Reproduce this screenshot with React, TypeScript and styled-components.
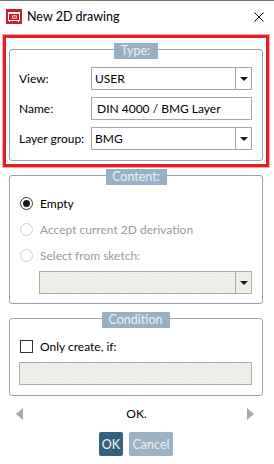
import React from 'react';
import styled, { createGlobalStyle } from 'styled-components';

const FONT = "Lato, 'Noto Sans', sans-serif";

const GlobalStyle = createGlobalStyle`
  html, body {
    margin: 0;
    padding: 0;
    background: #ffffff;
  }
  body {
    font-family: ${FONT};
    font-size: 12px;
    color: #000;
  }
`;

const Window = styled.div`
  width: 274px;
  height: 464px;
  box-sizing: border-box;
  border-top: 1px solid #5d7d5a;
  background: #fff;
  display: flex;
  flex-direction: column;
  overflow: hidden;
`;

const TitleBar = styled.div`
  height: 33px;
  display: flex;
  align-items: center;
  padding: 0 10px 2px 6px;
  box-sizing: border-box;
`;

const TitleText = styled.span`
  flex: 1;
  margin-left: 5px;
  font-size: 12.5px;
  color: #000;
`;

const Highlight = styled.div`
  margin: 1px 5px 0 3px;
  border: 3px solid #ec1c24;
  box-shadow: 0 0 0 1px #f7a8ab;
  padding: 11px 3px 3px 3px;
`;

const Group = styled.div<{ $top?: number }>`
  margin: ${({ $top }) => $top ?? 0}px 11px 0 9px;
  border: 1px solid #8ea6b8;
  border-radius: 3px;
  display: flex;
  flex-direction: column;
  padding: 0 10px 0 9px;
`;

const InnerGroup = styled(Group)`
  margin: 0;
`;

const Legend = styled.div<{ $w: number }>`
  align-self: center;
  width: ${({ $w }) => $w}px;
  height: 16px;
  margin-top: -7px;
  margin-left: ${({ $w }) => ($w % 2 ? 1 : 0)}px;
  background: #97b0c3;
  color: #eef3f7;
  font-size: 12.5px;
  line-height: 16px;
  text-align: center;
`;

const FieldRows = styled.div`
  display: flex;
  flex-direction: column;
  gap: 7px;
  padding: 8px 0 10px 0;
`;

const FieldRow = styled.div`
  display: grid;
  grid-template-columns: 72px 1fr;
  align-items: center;
`;

const Label = styled.span`
  color: #000;
`;

const Combo = styled.div<{ $disabled?: boolean }>`
  height: 23px;
  box-sizing: border-box;
  border: 1px solid ${({ $disabled }) => ($disabled ? '#adadad' : '#a5a5a5')};
  background: ${({ $disabled }) =>
    $disabled
      ? 'radial-gradient(circle, #dfe2da 0.6px, transparent 0.8px) 0 0 / 3px 3px, #eef0ea'
      : '#fff'};
  display: flex;
  align-items: stretch;
`;

const ComboValue = styled.span<{ $pad?: number }>`
  flex: 1;
  display: flex;
  align-items: center;
  padding-left: ${({ $pad }) => $pad ?? 3}px;
`;

const ComboButton = styled.span`
  width: 15px;
  border-left: 1px solid #a5a5a5;
  display: flex;
  align-items: center;
  justify-content: center;
`;

const Arrow = styled.span`
  width: 0;
  height: 0;
  border-left: 4px solid transparent;
  border-right: 4px solid transparent;
  border-top: 4px solid #1a1a1a;
  margin-left: 1px;
`;

const Options = styled.div`
  display: flex;
  flex-direction: column;
  padding: 5px 0 9px 1px;
`;

const OptionRow = styled.div<{ $disabled?: boolean }>`
  height: 26px;
  display: flex;
  align-items: center;
  gap: 7px;
  color: ${({ $disabled }) => ($disabled ? '#9a9a9a' : '#000')};
`;

const Radio = styled.span<{ $checked?: boolean; $disabled?: boolean }>`
  width: 13px;
  height: 13px;
  box-sizing: border-box;
  border-radius: 50%;
  border: 1px solid ${({ $disabled }) => ($disabled ? '#cfcfcf' : '#333')};
  background: #fff;
  display: flex;
  align-items: center;
  justify-content: center;
  &::after {
    content: '';
    display: ${({ $checked }) => ($checked ? 'block' : 'none')};
    width: 7px;
    height: 7px;
    border-radius: 50%;
    background: #1a1a1a;
  }
`;

const SketchCombo = styled(Combo)`
  margin: 3px 0 0 19px;
`;

const CheckRow = styled.div`
  height: 20px;
  margin-top: 8px;
  display: flex;
  align-items: center;
  gap: 7px;
  padding-left: 1px;
`;

const CheckBox = styled.span`
  width: 13px;
  height: 13px;
  box-sizing: border-box;
  border: 1px solid #333;
  background: #fff;
`;

const ConditionInput = styled.div`
  height: 23px;
  margin: 6px 0 10px 0;
  box-sizing: border-box;
  border: 1px solid #adadad;
  background: radial-gradient(circle, #dfe2da 0.6px, transparent 0.8px) 0 0 / 3px 3px, #eef0ea;
`;

const StatusRow = styled.div`
  margin: 11px 20px 0 16px;
  height: 13px;
  display: flex;
  align-items: center;
  justify-content: space-between;
`;

const NavArrow = styled.span<{ $dir: 'left' | 'right' }>`
  width: 0;
  height: 0;
  border-top: 6.5px solid transparent;
  border-bottom: 6.5px solid transparent;
  ${({ $dir }) =>
    $dir === 'left' ? 'border-right: 7px solid #a9a9a9;' : 'border-left: 7px solid #a9a9a9;'}
`;

const StatusText = styled.span`
  color: #000;
  margin-left: 3px;
`;

const Buttons = styled.div`
  margin-top: 12px;
  display: flex;
  justify-content: center;
  gap: 6px;
  padding-right: 2px;
`;

const Button = styled.button<{ $primary?: boolean; $w: number }>`
  width: ${({ $w }) => $w}px;
  height: 24px;
  padding: 0;
  border: none;
  border-radius: 2px;
  font-family: ${FONT};
  font-size: 12.5px;
  background: ${({ $primary }) => ($primary ? '#33617f' : '#9bb3c5')};
  color: ${({ $primary }) => ($primary ? '#f2f6f9' : '#e9eff4')};
`;

const AppIcon = () => (
  <svg width="16" height="16" viewBox="0 0 16 16">
    <rect x="0" y="0" width="16" height="15" fill="#c81f2b" />
    <rect x="2.5" y="3.5" width="11" height="8" fill="none" stroke="#fff" strokeWidth="1" />
    <rect x="2" y="3" width="12" height="2" fill="#fff" />
    <rect x="6" y="6" width="5" height="4" fill="#f3b6bb" />
    <path d="M6.5 6.5 L10.5 9.5 M10.5 6.5 L6.5 9.5" stroke="#c81f2b" strokeWidth="0.8" />
    <rect x="3" y="11" width="1" height="2" fill="#fff" />
    <rect x="12" y="11" width="1" height="2" fill="#fff" />
  </svg>
);

const CloseIcon = () => (
  <svg width="10" height="10" viewBox="0 0 10 10">
    <path d="M0.5 0.5 L9.5 9.5 M9.5 0.5 L0.5 9.5" stroke="#000" strokeWidth="1" />
  </svg>
);

export default function App() {
  return (
    <>
      <GlobalStyle />
      <Window>
        <TitleBar>
          <AppIcon />
          <TitleText>New 2D drawing</TitleText>
          <CloseIcon />
        </TitleBar>

        <Highlight>
          <InnerGroup>
            <Legend $w={44}>Type:</Legend>
            <FieldRows>
              <FieldRow>
                <Label>View:</Label>
                <Combo>
                  <ComboValue>USER</ComboValue>
                  <ComboButton>
                    <Arrow />
                  </ComboButton>
                </Combo>
              </FieldRow>
              <FieldRow>
                <Label>Name:</Label>
                <Combo>
                  <ComboValue $pad={5}>DIN 4000 / BMG Layer</ComboValue>
                </Combo>
              </FieldRow>
              <FieldRow>
                <Label>Layer group:</Label>
                <Combo>
                  <ComboValue>BMG</ComboValue>
                  <ComboButton>
                    <Arrow />
                  </ComboButton>
                </Combo>
              </FieldRow>
            </FieldRows>
          </InnerGroup>
        </Highlight>

        <Group $top={8}>
          <Legend $w={61}>Content:</Legend>
          <Options>
            <OptionRow>
              <Radio $checked />
              <span>Empty</span>
            </OptionRow>
            <OptionRow $disabled>
              <Radio $disabled />
              <span>Accept current 2D derivation</span>
            </OptionRow>
            <OptionRow $disabled>
              <Radio $disabled />
              <span>Select from sketch:</span>
            </OptionRow>
            <SketchCombo $disabled>
              <ComboValue />
              <ComboButton>
                <Arrow />
              </ComboButton>
            </SketchCombo>
          </Options>
        </Group>

        <Group $top={14}>
          <Legend $w={68}>Condition</Legend>
          <CheckRow>
            <CheckBox />
            <span>Only create, if:</span>
          </CheckRow>
          <ConditionInput />
        </Group>

        <StatusRow>
          <NavArrow $dir="left" />
          <StatusText>OK.</StatusText>
          <NavArrow $dir="right" />
        </StatusRow>

        <Buttons>
          <Button $primary $w={24}>OK</Button>
          <Button $w={44}>Cancel</Button>
        </Buttons>
      </Window>
    </>
  );
}
